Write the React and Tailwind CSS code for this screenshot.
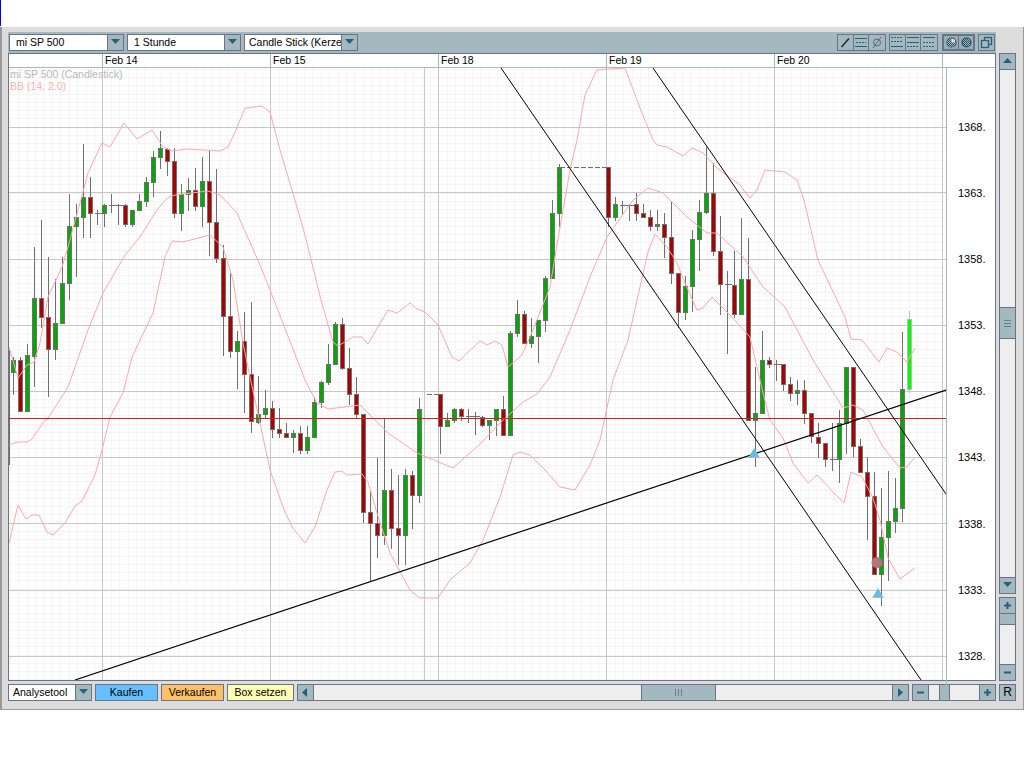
const GREEN = "#00aa00";
const RED = "#aa0000";

// candles in crop coordinates: [x, wickTop, wickBottom, bodyTop, bodyBottom, colour]
const seg1 = [
  [40, 682, 795, 690, 725, "g"], [61, 682, 842, 690, 842, "r"], [82, 642, 842, 676, 842, "g"],
  [103, 350, 770, 505, 677, "g"], [124, 270, 593, 505, 560, "r"], [145, 380, 800, 560, 658, "r"],
  [166, 448, 690, 580, 658, "g"], [187, 380, 580, 460, 580, "g"], [208, 192, 510, 289, 460, "g"],
  [229, 222, 440, 262, 289, "g"], [250, 42, 325, 202, 262, "g"], [271, 142, 325, 202, 250, "r"],
  [292, 240, 285, 250, 250, "d"], [313, 222, 290, 226, 250, "g"], [334, 192, 250, 225, 225, "d"],
  [355, 222, 285, 225, 225, "d"], [376, 222, 290, 224, 283, "r"], [397, 240, 290, 241, 283, "g"],
  [418, 192, 242, 214, 241, "g"], [439, 142, 230, 157, 214, "g"], [460, 64, 200, 82, 157, "g"],
  [481, 3, 116, 55, 82, "g"], [502, 55, 138, 58, 94, "r"], [523, 55, 264, 94, 250, "r"],
  [544, 162, 303, 193, 250, "g"], [565, 144, 243, 181, 193, "g"], [586, 114, 243, 181, 229, "r"],
  [607, 80, 290, 154, 229, "g"], [628, 64, 378, 154, 277, "r"], [649, 118, 398, 277, 385, "r"],
  [670, 345, 678, 385, 559, "r"], [691, 430, 684, 559, 664, "r"], [712, 603, 777, 634, 664, "g"],
  [733, 545, 850, 634, 733, "r"], [754, 517, 910, 733, 873, "r"],
];
const seg2 = [
  [25, 228, 372, 343, 365, "g"], [46, 270, 355, 325, 343, "g"], [67, 303, 413, 325, 388, "r"],
  [88, 323, 413, 388, 400, "r"], [109, 368, 413, 400, 412, "r"], [130, 390, 460, 400, 412, "g"],
  [151, 378, 462, 400, 451, "r"], [172, 378, 462, 412, 451, "g"], [193, 292, 412, 307, 412, "g"],
  [214, 244, 325, 247, 307, "g"], [235, 132, 254, 193, 247, "g"], [256, 66, 193, 73, 193, "g"],
  [277, 54, 210, 73, 205, "r"], [298, 144, 315, 205, 283, "r"], [319, 232, 353, 283, 343, "r"],
  [340, 343, 670, 343, 637, "r"], [361, 573, 843, 637, 670, "r"], [382, 475, 773, 670, 706, "r"],
  [403, 355, 735, 571, 706, "g"], [424, 507, 746, 571, 685, "r"], [445, 525, 795, 685, 706, "r"],
  [466, 507, 795, 526, 706, "g"], [487, 514, 687, 526, 586, "r"], [508, 294, 608, 328, 586, "g"],
  [571, 283, 462, 283, 379, "r"], [592, 340, 380, 361, 379, "g"], [613, 325, 368, 328, 361, "g"],
  [634, 323, 362, 328, 349, "r"], [655, 326, 368, 349, 349, "d"], [676, 336, 404, 349, 349, "d"],
  [697, 349, 382, 350, 376, "r"], [718, 360, 420, 361, 376, "g"], [739, 326, 407, 328, 361, "g"],
  [760, 288, 407, 328, 406, "r"], [781, 93, 406, 100, 406, "g"],
];
const seg3 = [
  [52, 480, 590, 523, 580, "g"], [73, 512, 610, 523, 610, "r"], [94, 534, 624, 589, 610, "g"],
  [115, 541, 670, 541, 589, "g"], [136, 408, 575, 415, 541, "g"], [157, 180, 418, 220, 415, "g"],
  [178, 72, 260, 82, 220, "g"], [325, 82, 262, 82, 232, "r"], [346, 172, 243, 193, 232, "g"],
  [367, 182, 222, 194, 194, "d"], [388, 193, 243, 194, 194, "d"], [409, 159, 243, 193, 220, "r"],
  [430, 193, 233, 220, 232, "r"], [451, 210, 272, 232, 259, "r"], [472, 210, 272, 253, 259, "g"],
  [493, 220, 353, 253, 292, "r"], [514, 183, 432, 292, 400, "r"], [535, 399, 563, 400, 517, "r"],
  [556, 408, 540, 439, 517, "g"], [577, 270, 517, 297, 439, "g"], [598, 180, 393, 217, 298, "g"],
  [619, 20, 222, 160, 217, "g"], [640, 70, 348, 160, 334, "r"], [661, 228, 525, 334, 433, "r"],
  [682, 393, 642, 433, 433, "d"],
];
const seg4 = [
  [13, 153, 355, 254, 343, "r"], [34, 54, 343, 236, 343, "g"], [55, 114, 661, 236, 661, "r"],
  [76, 500, 800, 640, 661, "g"], [97, 393, 640, 481, 640, "g"], [118, 472, 503, 481, 493, "r"],
  [139, 480, 543, 493, 493, "d"], [160, 493, 573, 493, 553, "r"], [181, 532, 603, 553, 580, "r"],
  [202, 540, 615, 571, 580, "g"], [223, 540, 672, 571, 640, "r"], [244, 640, 730, 640, 707, "r"],
  [265, 670, 773, 712, 730, "r"], [286, 730, 800, 730, 778, "r"], [307, 670, 813, 778, 778, "d"],
  [328, 630, 850, 670, 778, "g"], [349, 502, 762, 502, 670, "g"], [370, 502, 772, 502, 739, "r"],
  [391, 717, 817, 739, 817, "r"], [412, 772, 1020, 817, 889, "r"], [433, 817, 1123, 889, 1123, "r"],
  [454, 865, 1217, 1012, 1123, "g"], [475, 813, 1142, 964, 1012, "g"], [496, 833, 1000, 925, 964, "g"],
  [517, 396, 965, 568, 925, "g"], [538, 334, 578, 358, 568, "b"],
];

function toPage(seg, ox, oy) {
  return seg.map(([x, wt, wb, bt, bb, c]) => ({
    x: Math.floor(ox + x / 3) + 0.5,
    wt: Math.round(oy + wt / 3),
    wb: Math.round(oy + wb / 3),
    bt: Math.round(oy + bt / 3) + 0.5,
    bb: Math.round(oy + bb / 3) + 0.5,
    c,
  }));
}

const candles = [
  ...toPage(seg1, 0, 130),
  ...toPage(seg2, 250, 300),
  ...toPage(seg3, 500, 140),
  ...toPage(seg4, 730, 200),
];

const upper = "9,347 18,378 27,365 34,362 40,343 48,297 62,267 68,247 80,203 88,173 102,143 110,147 120,130 124,123 137,139 152,130 163,147 172,151 187,149 220,151 228,147 236,130 245,108 262,106 270,112 280,150 292,190 305,235 321,300 333,342 338,346 353,337 362,337 368,344 388,310 397,313 410,303 417,309 425,312 438,325 452,357 459,361 480,341 487,345 495,341 502,345 508,367 522,355 533,330 550,287 560,227 570,170 577,140 585,95 597,70 625,68 640,108 653,140 657,145 667,147 683,156 692,148 703,153 717,168 740,185 750,198 757,190 765,170 785,172 797,180 804,200 818,260 845,317 851,339 862,340 879,362 887,348 897,352 907,362 915,348";
const middle = "9,445 18,442 27,442 32,439 45,420 47,420 68,387 88,330 103,293 125,255 140,237 157,210 167,198 175,195 208,191 220,195 237,213 260,265 274,300 305,380 317,403 328,409 360,405 388,433 417,453 453,468 480,444 500,423 523,402 537,394 550,377 570,330 590,277 607,237 633,200 648,188 663,193 687,217 707,233 717,233 730,245 743,257 763,287 785,307 813,360 843,408 853,405 863,410 883,447 900,468 907,467 915,457";
const lower = "9,543 18,505 26,519 32,515 39,515 47,532 53,535 65,523 75,506 82,501 95,475 102,450 110,417 123,393 132,357 153,313 165,257 172,241 183,242 210,235 223,247 233,280 243,343 250,377 260,423 270,470 283,507 292,527 305,543 315,527 327,490 335,472 342,471 347,475 362,474 368,482 377,513 390,553 410,590 420,598 438,598 450,580 470,563 483,540 500,497 513,455 520,452 530,455 545,470 560,487 575,490 590,465 600,440 613,380 628,340 640,287 648,252 655,234 667,247 677,263 685,283 697,310 703,308 712,297 720,305 730,315 750,337 763,393 770,420 783,438 793,463 808,483 817,475 833,492 844,503 851,472 862,477 873,498 880,520 888,558 900,579 915,568";

const majorY = [127, 192, 259, 325, 391, 457, 523, 590, 656];
const majorX = [102, 270, 424, 438, 606, 774, 942];
const yLabels = ["1368.", "1363.", "1358.", "1353.", "1348.", "1343.", "1338.", "1333.", "1328."];
const dates = ["Feb 14", "Feb 15", "Feb 18", "Feb 19", "Feb 20"];

function minorLines() {
  const lines = [];
  for (let x = 10.5; x < 946; x += 8.4) lines.push(<line key={"x" + x} x1={Math.floor(x) + 0.5} x2={Math.floor(x) + 0.5} y1="68" y2="680" />);
  for (let y = 61; y < 680; y += 8.25) lines.push(<line key={"y" + y} x1="9" x2="946" y1={Math.floor(y) + 0.5} y2={Math.floor(y) + 0.5} />);
  return lines;
}

function Candle({ c }) {
  const fill = c.c === "g" ? GREEN : c.c === "r" ? RED : "#00ff00";
  const stroke = c.c === "b" ? "#b8b8b8" : "#707070";
  return (
    <g shapeRendering="crispEdges">
      <line x1={c.x} x2={c.x} y1={c.wt} y2={c.wb} stroke={stroke} />
      {c.c === "d" ? (
        <line x1={c.x - 3} x2={c.x + 4} y1={c.bt} y2={c.bt} stroke="#707070" />
      ) : (
        <rect x={c.x - 2} y={c.bt} width="4" height={Math.max(c.bb - c.bt, 1)} fill={fill} stroke={stroke} />
      )}
    </g>
  );
}

function Marker({ x, y }) {
  return (
    <g>
      <path d={`M${x} ${y}l5.5 9.5h-11z`} fill="#66bbee" />
      <line x1={x - 6} x2={x + 6} y1={y + 9.5} y2={y + 9.5} stroke="#b8b8b8" />
    </g>
  );
}

function Chart() {
  return (
    <svg className="block shrink-0" width="937" height="612" viewBox="9 68 937 612">
      <g stroke="#f5f5f5" shapeRendering="crispEdges">{minorLines()}</g>
      <g stroke="#c8c8c8" shapeRendering="crispEdges">
        {majorY.map((y) => <line key={y} x1="9" x2="946" y1={y + 0.5} y2={y + 0.5} />)}
        {majorX.map((x) => <line key={x} x1={x + 0.5} x2={x + 0.5} y1="68" y2="680" />)}
      </g>
      <line x1="9.5" x2="9.5" y1="350" y2="465" stroke="#707070" />
      <g stroke="#707070" strokeDasharray="5 2" shapeRendering="crispEdges">
        <line x1="427" x2="440" y1="394.5" y2="394.5" />
        <line x1="560" x2="608" y1="167.5" y2="167.5" />
      </g>
      {candles.map((c, i) => <Candle key={i} c={c} />)}
      <g fill="none" stroke="#ffa8a8">
        <polyline points={upper} />
        <polyline points={middle} />
        <polyline points={lower} />
      </g>
      <line x1="9" x2="946" y1="418.5" y2="418.5" stroke="#cc2222" shapeRendering="crispEdges" />
      <g stroke="#000000">
        <line x1="501" y1="68" x2="921" y2="680" />
        <line x1="653" y1="68" x2="946" y2="494" />
        <line x1="75" y1="680" x2="946" y2="390" strokeWidth="1.2" />
      </g>
      <Marker x={754} y={448} />
      <Marker x={878} y={588} />
      <circle cx="877" cy="562.5" r="5.5" fill="#b07878" />
    </svg>
  );
}

function Arrow({ dir }) {
  const d = { down: "M1 2h9l-4.5 5z", up: "M1 7h9l-4.5-5z", left: "M7 1v9l-5-4.5z", right: "M3 1v9l5-4.5z" }[dir];
  return (
    <svg width="11" height="11" viewBox="0 0 11 11" className="block">
      <path d={d} fill="#2b5f74" />
    </svg>
  );
}

function PlusMinus({ plus }) {
  return (
    <svg width="9" height="9" viewBox="0 0 9 9" className="block">
      <rect x="1" y="3.5" width="7" height="2" fill="#2b5f74" />
      {plus && <rect x="3.5" y="1" width="2" height="7" fill="#2b5f74" />}
    </svg>
  );
}

function Combo({ label, width, text }) {
  return (
    <div className={`flex h-[17px] shrink-0 border border-[#6a7488] bg-white ${width}`}>
      <div className={`min-w-0 flex-1 overflow-hidden whitespace-nowrap leading-[15px] ${text}`}>{label}</div>
      <div className="flex w-[16px] shrink-0 items-center justify-center border-l border-[#6a7488] bg-[#a4b8c0]">
        <Arrow dir="down" />
      </div>
    </div>
  );
}

function ToolIcon({ children }) {
  return (
    <div className="flex h-full w-[16px] items-center justify-center border-r border-[#6a7488] last:border-r-0">
      <svg width="14" height="13" viewBox="0 0 14 13" fill="none">{children}</svg>
    </div>
  );
}

function Dither() {
  return (
    <svg width="0" height="0" className="absolute">
      <defs>
        <pattern id="dither" width="2" height="2" patternUnits="userSpaceOnUse">
          <rect width="2" height="2" fill="#a4b8c0" />
          <rect width="1" height="1" fill="#234f62" />
          <rect x="1" y="1" width="1" height="1" fill="#234f62" />
        </pattern>
      </defs>
    </svg>
  );
}

function Toolbar() {
  return (
    <div className="flex h-[21px] w-[988px] items-center bg-[#a4b8c0] pl-[1px]">
      <Dither />
      <div className="flex gap-[3px]">
        <Combo label="mi SP 500" width="w-[115px]" text="pl-[6px]" />
        <Combo label="1 Stunde" width="w-[114px]" text="pl-[6px]" />
        <Combo label="Candle Stick (Kerze" width="w-[114px]" text="pl-[4px]" />
      </div>
      <div className="ml-[479px] flex h-[17px] w-[49px] border border-[#6a7488]">
        <ToolIcon>
          <path d="M11 2.5 3.5 11" stroke="#1f2f38" strokeWidth="1.6" />
        </ToolIcon>
        <ToolIcon>
          <path d="M1 2.5h12M1 10.5h12" stroke="#2b5f74" />
          <path d="M2 6.5h10" stroke="#2b5f74" strokeDasharray="2 1" />
        </ToolIcon>
        <ToolIcon>
          <circle cx="7" cy="6.5" r="3.5" stroke="#5a6a72" />
          <path d="M11 1 3 12" stroke="#5a6a72" />
        </ToolIcon>
      </div>
      <div className="ml-[3px] flex h-[17px] w-[49px] border border-[#6a7488]">
        <ToolIcon>
          <path d="M1 1.5h12M1 5.5h12" stroke="#2b5f74" strokeDasharray="2 1" />
          <path d="M1 10.5h12" stroke="#2b5f74" />
        </ToolIcon>
        <ToolIcon>
          <path d="M1 1.5h12M1 6.5h12" stroke="#2b5f74" />
          <path d="M1 10.5h12" stroke="#2b5f74" strokeDasharray="2 1" />
        </ToolIcon>
        <ToolIcon>
          <path d="M1 1.5h12" stroke="#2b5f74" />
          <path d="M1 6.5h12M1 10.5h12" stroke="#2b5f74" strokeDasharray="2 1" />
        </ToolIcon>
      </div>
      <div className="ml-[4px] flex h-[17px] w-[33px] border-2 border-[#6a7488] bg-[#98adb6]">
        <div className="flex w-[15px] items-center justify-center border-r border-[#6a7488]">
          <svg width="11" height="11" viewBox="0 0 11 11">
            <circle cx="5.5" cy="5.5" r="4.5" fill="#dce4e8" stroke="#234f62" strokeWidth="1.2" />
            <path d="M5.5 5.5V1a4.5 4.5 0 1 0 4.5 4.5z" fill="url(#dither)" />
          </svg>
        </div>
        <div className="flex flex-1 items-center justify-center">
          <svg width="11" height="11" viewBox="0 0 11 11">
            <circle cx="5.5" cy="5.5" r="4.5" fill="url(#dither)" stroke="#234f62" strokeWidth="1.2" />
          </svg>
        </div>
      </div>
      <div className="ml-[3px] flex h-[17px] w-[17px] items-center justify-center border border-[#6a7488]">
        <svg width="13" height="13" viewBox="0 0 13 13" fill="none">
          <rect x="4.5" y="1.5" width="7" height="7" stroke="#2b5f74" strokeWidth="1.3" />
          <rect x="1.5" y="4.5" width="7" height="7" fill="#a4b8c0" stroke="#2b5f74" strokeWidth="1.3" />
        </svg>
      </div>
    </div>
  );
}

function ChartPanel() {
  return (
    <div className="relative h-[628px] w-[988px] shrink-0 border border-[#6a7488] bg-white">
      <div className="flex h-[13px] w-[986px]">
        <div className="w-[93px] shrink-0" />
        {dates.map((d) => (
          <div key={d} className="w-[168px] shrink-0 border-l border-[#a4b8c0] pl-[2px] leading-[13px]">{d}</div>
        ))}
        <div className="flex-1 border-l border-[#a4b8c0]" />
      </div>
      <div className="flex border-t border-[#a4b8c0]">
        <Chart />
        <div className="flex-1 border-l border-[#a4b8c0] pt-[26px]">
          {yLabels.map((l) => (
            <div key={l} className="h-[66.1px] pl-[11px] text-[11px] leading-[66px]">{l}</div>
          ))}
        </div>
      </div>
      <div className="absolute left-[1px] top-[14px] leading-[12px] text-[#b8b8b8]">mi SP 500 (Candlestick)</div>
      <div className="absolute left-[1px] top-[26px] leading-[12px] text-[#ffb0b0]">BB (14, 2.0)</div>
    </div>
  );
}

function SideBar() {
  return (
    <div className="ml-[3px] flex h-[628px] w-[17px] flex-col">
      <div className="relative h-[544px] border border-[#6a7488] bg-[#eeeeee]">
        <div className="flex h-[16px] items-center justify-center border-b border-[#6a7488] bg-[#a4b8c0]">
          <Arrow dir="up" />
        </div>
        <div className="absolute left-0 top-[253px] flex h-[32px] w-full items-center justify-center border-y border-[#6a7488] bg-[#a4b8c0]">
          <svg width="9" height="7" viewBox="0 0 9 7"><path d="M1 .5h7M1 3.5h7M1 6.5h7" stroke="#66808c" /></svg>
        </div>
        <div className="absolute bottom-0 left-0 flex h-[16px] w-full items-center justify-center border-t border-[#6a7488] bg-[#a4b8c0]">
          <Arrow dir="down" />
        </div>
      </div>
      <div className="mt-[3px] flex h-[84px] flex-col border border-[#6a7488] bg-[#eeeeee]">
        <div className="flex h-[16px] items-center justify-center border-b border-[#6a7488] bg-[#a4b8c0]">
          <PlusMinus plus />
        </div>
        <div className="h-[11px] border-b border-[#6a7488] bg-[#a4b8c0]" />
        <div className="flex-1" />
        <div className="flex h-[16px] items-center justify-center border-t border-[#6a7488] bg-[#a4b8c0]">
          <PlusMinus />
        </div>
      </div>
    </div>
  );
}

function ColorButton({ label, bg, width }) {
  return (
    <div className={`h-[17px] shrink-0 border border-[#6a7488] text-center leading-[15px] ${bg} ${width}`}>{label}</div>
  );
}

function BottomBar() {
  return (
    <div className="mt-[3px] flex h-[17px] items-stretch">
      <Combo label="Analysetool" width="w-[84px]" text="pl-[4px]" />
      <div className="ml-[3px] flex gap-[3px]">
        <ColorButton label="Kaufen" bg="bg-[#66bfff]" width="w-[63px]" />
        <ColorButton label="Verkaufen" bg="bg-[#ffc166]" width="w-[63px]" />
        <ColorButton label="Box setzen" bg="bg-[#ffffb3]" width="w-[67px]" />
      </div>
      <div className="ml-[3px] flex w-[612px] border border-[#6a7488] bg-[#eeeeee]">
        <div className="flex w-[16px] items-center justify-center border-r border-[#6a7488] bg-[#a4b8c0]">
          <Arrow dir="left" />
        </div>
        <div className="w-[327px]" />
        <div className="flex w-[75px] items-center justify-center border-x border-[#6a7488] bg-[#a4b8c0]">
          <svg width="7" height="9" viewBox="0 0 7 9"><path d="M.5 1v7M3.5 1v7M6.5 1v7" stroke="#66808c" /></svg>
        </div>
        <div className="flex-1" />
        <div className="flex w-[16px] items-center justify-center border-l border-[#6a7488] bg-[#a4b8c0]">
          <Arrow dir="right" />
        </div>
      </div>
      <div className="ml-[3px] flex w-[84px] border border-[#6a7488] bg-[#eeeeee]">
        <div className="flex w-[16px] items-center justify-center border-r border-[#6a7488] bg-[#a4b8c0]">
          <PlusMinus />
        </div>
        <div className="w-[10px]" />
        <div className="w-[11px] border-x border-[#6a7488] bg-[#a4b8c0]" />
        <div className="flex-1" />
        <div className="flex w-[16px] items-center justify-center border-l border-[#6a7488] bg-[#a4b8c0]">
          <PlusMinus plus />
        </div>
      </div>
      <div className="ml-[3px] w-[17px] border border-[#6a7488] bg-[#a4b8c0] text-center text-[12px] leading-[15px]">R</div>
    </div>
  );
}

export default function App() {
  return (
    <div className="h-[768px] w-[1024px] overflow-hidden bg-white font-['Liberation_Sans',sans-serif] text-[10.5px] text-black">
      <div className="h-[27px]">
        <div className="h-[26px] w-[1px] bg-[#0000ee]" />
      </div>
      <div className="h-[683px] border-b border-l-2 border-r border-[#999999] bg-[#dcdcdc] pl-[6px] pt-[5px]">
        <Toolbar />
        <div className="flex">
          <ChartPanel />
          <SideBar />
        </div>
        <BottomBar />
      </div>
    </div>
  );
}
